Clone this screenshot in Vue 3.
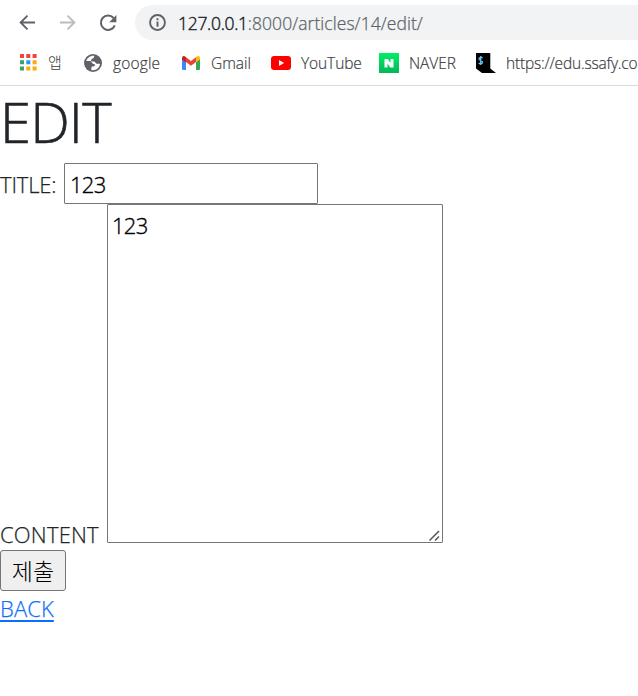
<script setup>
import { ref } from 'vue'
const title = ref('123')
const content = ref('123')
</script>

<template>
  <div class="window">
    <header class="chrome">
      <div class="toolbar">
        <svg class="nav back" viewBox="0 0 18 18"><path d="M17 9H2.2M9 1.7 1.7 9 9 16.3" fill="none" stroke="#5f6368" stroke-width="2" /></svg>
        <svg class="nav forward" viewBox="0 0 18 18"><path d="M1 9h14.8M9 1.7 16.3 9 9 16.3" fill="none" stroke="#babcbe" stroke-width="2" /></svg>
        <svg class="nav reload" viewBox="0 0 18 18"><path d="M14.6 4A7.2 7.2 0 1 0 15.8 11.3" fill="none" stroke="#5f6368" stroke-width="2" /><path d="M17.4 1v7.2h-7.2z" fill="#5f6368" /></svg>
        <div class="address">
          <svg class="info" viewBox="0 0 16 16"><circle cx="8" cy="8" r="7" fill="none" stroke="#5f6368" stroke-width="1.8" /><path d="M7.1 7h1.8v5H7.1zM7.1 4h1.8v1.8H7.1z" fill="#5f6368" /></svg>
          <span class="url"><b>127.0.0.1</b>:8000/articles/14/edit/</span>
        </div>
      </div>
      <nav class="bookmarks">
        <a class="mark apps">
          <svg viewBox="0 0 17 17"><path d="M0 0h4v4H0zM6.3 0h4v4h-4zM12.6 0h4v4h-4z" fill="#f44336" /><path d="M0 6.3h4v4H0zM0 12.6h4v4H0z" fill="#34a565" /><path d="M6.3 6.3h4v4h-4z" fill="#2196f3" /><path d="M12.6 6.3h4v4h-4zM6.3 12.6h4v4h-4zM12.6 12.6h4v4h-4z" fill="#fbaa09" /></svg>
          <span>앱</span>
        </a>
        <a class="mark google">
          <svg viewBox="0 0 18 18"><circle cx="9" cy="9" r="9" fill="#5f6368" /><path d="M10.5 1.9C7 1.3 3.4 3.6 2.2 7h2.6c1.6 0 2.8.4 3.2 1.7.3 1 1.5 1 2.3 1.4.9.5.7 1.8-.2 2.2-1 .4-2.4.1-2.7 1.2-.3.9.3 1.5-.2 2.5 4.2 1 8.4-1.7 8.8-6-1.3-.7-2.2.2-3.5-.3-1.2-.5-1.1-2-2.6-2.1-1.3 0-2.4.2-2.8-.9-.4-1.2.9-1.8 1.8-2.2 1-.5.9-1.6 1.6-2.6z" fill="#fff" /></svg>
          <span>google</span>
        </a>
        <a class="mark gmail">
          <svg viewBox="0 0 18 14"><path d="M0 2v10.7Q0 14 1.3 14H4V6z" fill="#4285f4" /><path d="M14 6v8h2.7q1.3 0 1.3-1.3V2z" fill="#34a853" /><path d="M4 1.2 9 5l5-3.8V6L9 9.8 4 6z" fill="#ea4335" /><path d="M0 2Q0 0 1.8 0 2.7 0 4 1.2v5.2L0 3.5z" fill="#c5221f" /><path d="M18 2q0-2-1.8-2-.9 0-2.2 1.2v5.2l4-2.9z" fill="#fbbc04" /></svg>
          <span>Gmail</span>
        </a>
        <a class="mark youtube">
          <svg viewBox="0 0 20 14"><rect width="20" height="14" rx="3.2" fill="#f00" /><path d="m8 4 5.2 3L8 10z" fill="#fff" /></svg>
          <span>YouTube</span>
        </a>
        <a class="mark naver">
          <svg viewBox="0 0 20 20"><defs><linearGradient id="naver-green" x2="0" y2="1"><stop stop-color="#00ef64" /><stop offset="1" stop-color="#05b65a" /></linearGradient></defs><path d="M0 0h20v20H0z" fill="url(#naver-green)" /><path d="M5.5 6h3.2l2.8 4V6h3v8.4h-3.2l-2.8-4v4h-3z" fill="#fff" /></svg>
          <span>NAVER</span>
        </a>
        <a class="mark ssafy">
          <svg viewBox="0 0 20 20"><path d="M0 0h14.3v15.5L20 20H6l-6-4.6z" fill="#000" /><path d="M6.4 5.2C5.7 3.8 3 4 3 5.7c0 1.9 3.5 1.5 3.5 3.6 0 1.9-2.9 2.1-3.8.6M4.7 3v9" fill="none" stroke="#65c7ee" stroke-width="1.3" /></svg>
          <span>https://edu.ssafy.co</span>
        </a>
      </nav>
    </header>
    <main>
      <h1>EDIT</h1>
      <form @submit.prevent>
        <div class="field title"><label for="title">TITLE:</label><input id="title" v-model="title" type="text"></div>
        <div class="field content"><label for="content">CONTENT</label><div class="area"><textarea id="content" v-model="content"></textarea><svg class="grip" viewBox="0 0 11 11"><path d="M.5 10.5 10 1M6 10.5l4-4" fill="none" stroke="#555" stroke-width="1.5" /></svg></div></div>
        <button type="submit">제출</button>
      </form>
      <a class="return" href="#">BACK</a>
    </main>
  </div>
</template>

<style>
body { background: #fff; overflow: hidden; }
</style>

<style scoped>
* { box-sizing: border-box; }
.window { width: 638px; height: 696px; overflow: hidden; background: #fff; color: #212529; font-family: "Open Sans", "Noto Sans CJK KR", sans-serif; -webkit-text-stroke: .25px currentColor; }
svg { display: block; flex: none; }
.chrome { height: 86px; border-bottom: 1px solid #d9dadb; }
.toolbar { display: flex; align-items: center; height: 45px; padding-left: 19px; }
.nav { width: 17px; height: 17px; margin-right: 23px; }
.reload { width: 18px; height: 18px; margin-right: 18px; }
.address { display: flex; align-items: center; width: 520px; height: 35px; padding-left: 14px; border-radius: 18px 0 0 18px; background: #f1f3f4; }
.info { width: 17px; height: 17px; }
.url { margin-left: 12px; color: #5f6368; font-size: 17.5px; font-weight: 300; letter-spacing: .06px; white-space: nowrap; }
.url b { color: #202124; font-weight: 300; letter-spacing: -.3px; -webkit-text-stroke: .4px #202124; }
.bookmarks { display: flex; height: 35px; padding-left: 20px; }
.mark { display: flex; flex: none; align-items: center; color: #3c4043; font-size: 15.5px; font-weight: 300; letter-spacing: -.06px; white-space: nowrap; -webkit-text-stroke: .2px #3c4043; }
.mark.apps { width: 64px; gap: 11px; font-size: 15px; -webkit-text-stroke-width: 0; }
.apps span { margin-top: -3px; }
.apps svg { width: 17px; height: 17px; }
.google { width: 98px; gap: 11px; letter-spacing: .15px; }
.google svg { width: 18px; height: 18px; }
.gmail { width: 89px; gap: 11px; }
.gmail svg { width: 18px; height: 14px; }
.youtube { width: 108px; gap: 10px; letter-spacing: -.1px; }
.youtube svg { width: 20px; height: 14px; }
.naver { width: 97px; gap: 10px; }
.naver svg, .ssafy svg { width: 20px; height: 20px; }
.ssafy { gap: 10px; letter-spacing: -.2px; }
main { font-size: 22px; font-weight: 300; }
h1 { height: 77px; margin: 0; font-size: 56px; font-weight: 300; line-height: 71px; letter-spacing: -.8px; -webkit-text-stroke: .6px #212529; }
.field { display: flex; }
label { flex: none; white-space: nowrap; letter-spacing: .2px; }
.title { height: 41px; }
.title label { width: 64px; line-height: 42px; letter-spacing: -.15px; }
input, textarea { display: block; border: 1px solid #767676; border-radius: 1px; background: #fff; color: #000; font: 300 22px "Open Sans", sans-serif; letter-spacing: -.7px; outline: none; -webkit-text-stroke: .35px #000; }
input { width: 254px; height: 41px; padding: 1px 5px 0; }
.content { align-items: flex-end; height: 339px; }
.content label { width: 107px; line-height: 30px; margin-bottom: -6px; }
.area { position: relative; width: 336px; height: 339px; }
textarea { width: 100%; height: 100%; padding: 5px 4px; line-height: 30px; resize: none; overflow: hidden; }
.grip { position: absolute; right: 3px; bottom: 2px; width: 11px; height: 11px; }
button { display: block; width: 66px; height: 41px; margin-top: 7px; padding: 0 0 2px; border: 1px solid #767676; border-radius: 3px; background: #efefef; color: #000; font: 300 23px "Noto Sans CJK KR", sans-serif; -webkit-text-stroke-width: 0; }
.return { display: block; width: 56px; color: #0d6efd; line-height: 34px; letter-spacing: .1px; text-underline-offset: 3px; text-decoration-thickness: 2px; -webkit-text-stroke: .25px #0d6efd; }
</style>
